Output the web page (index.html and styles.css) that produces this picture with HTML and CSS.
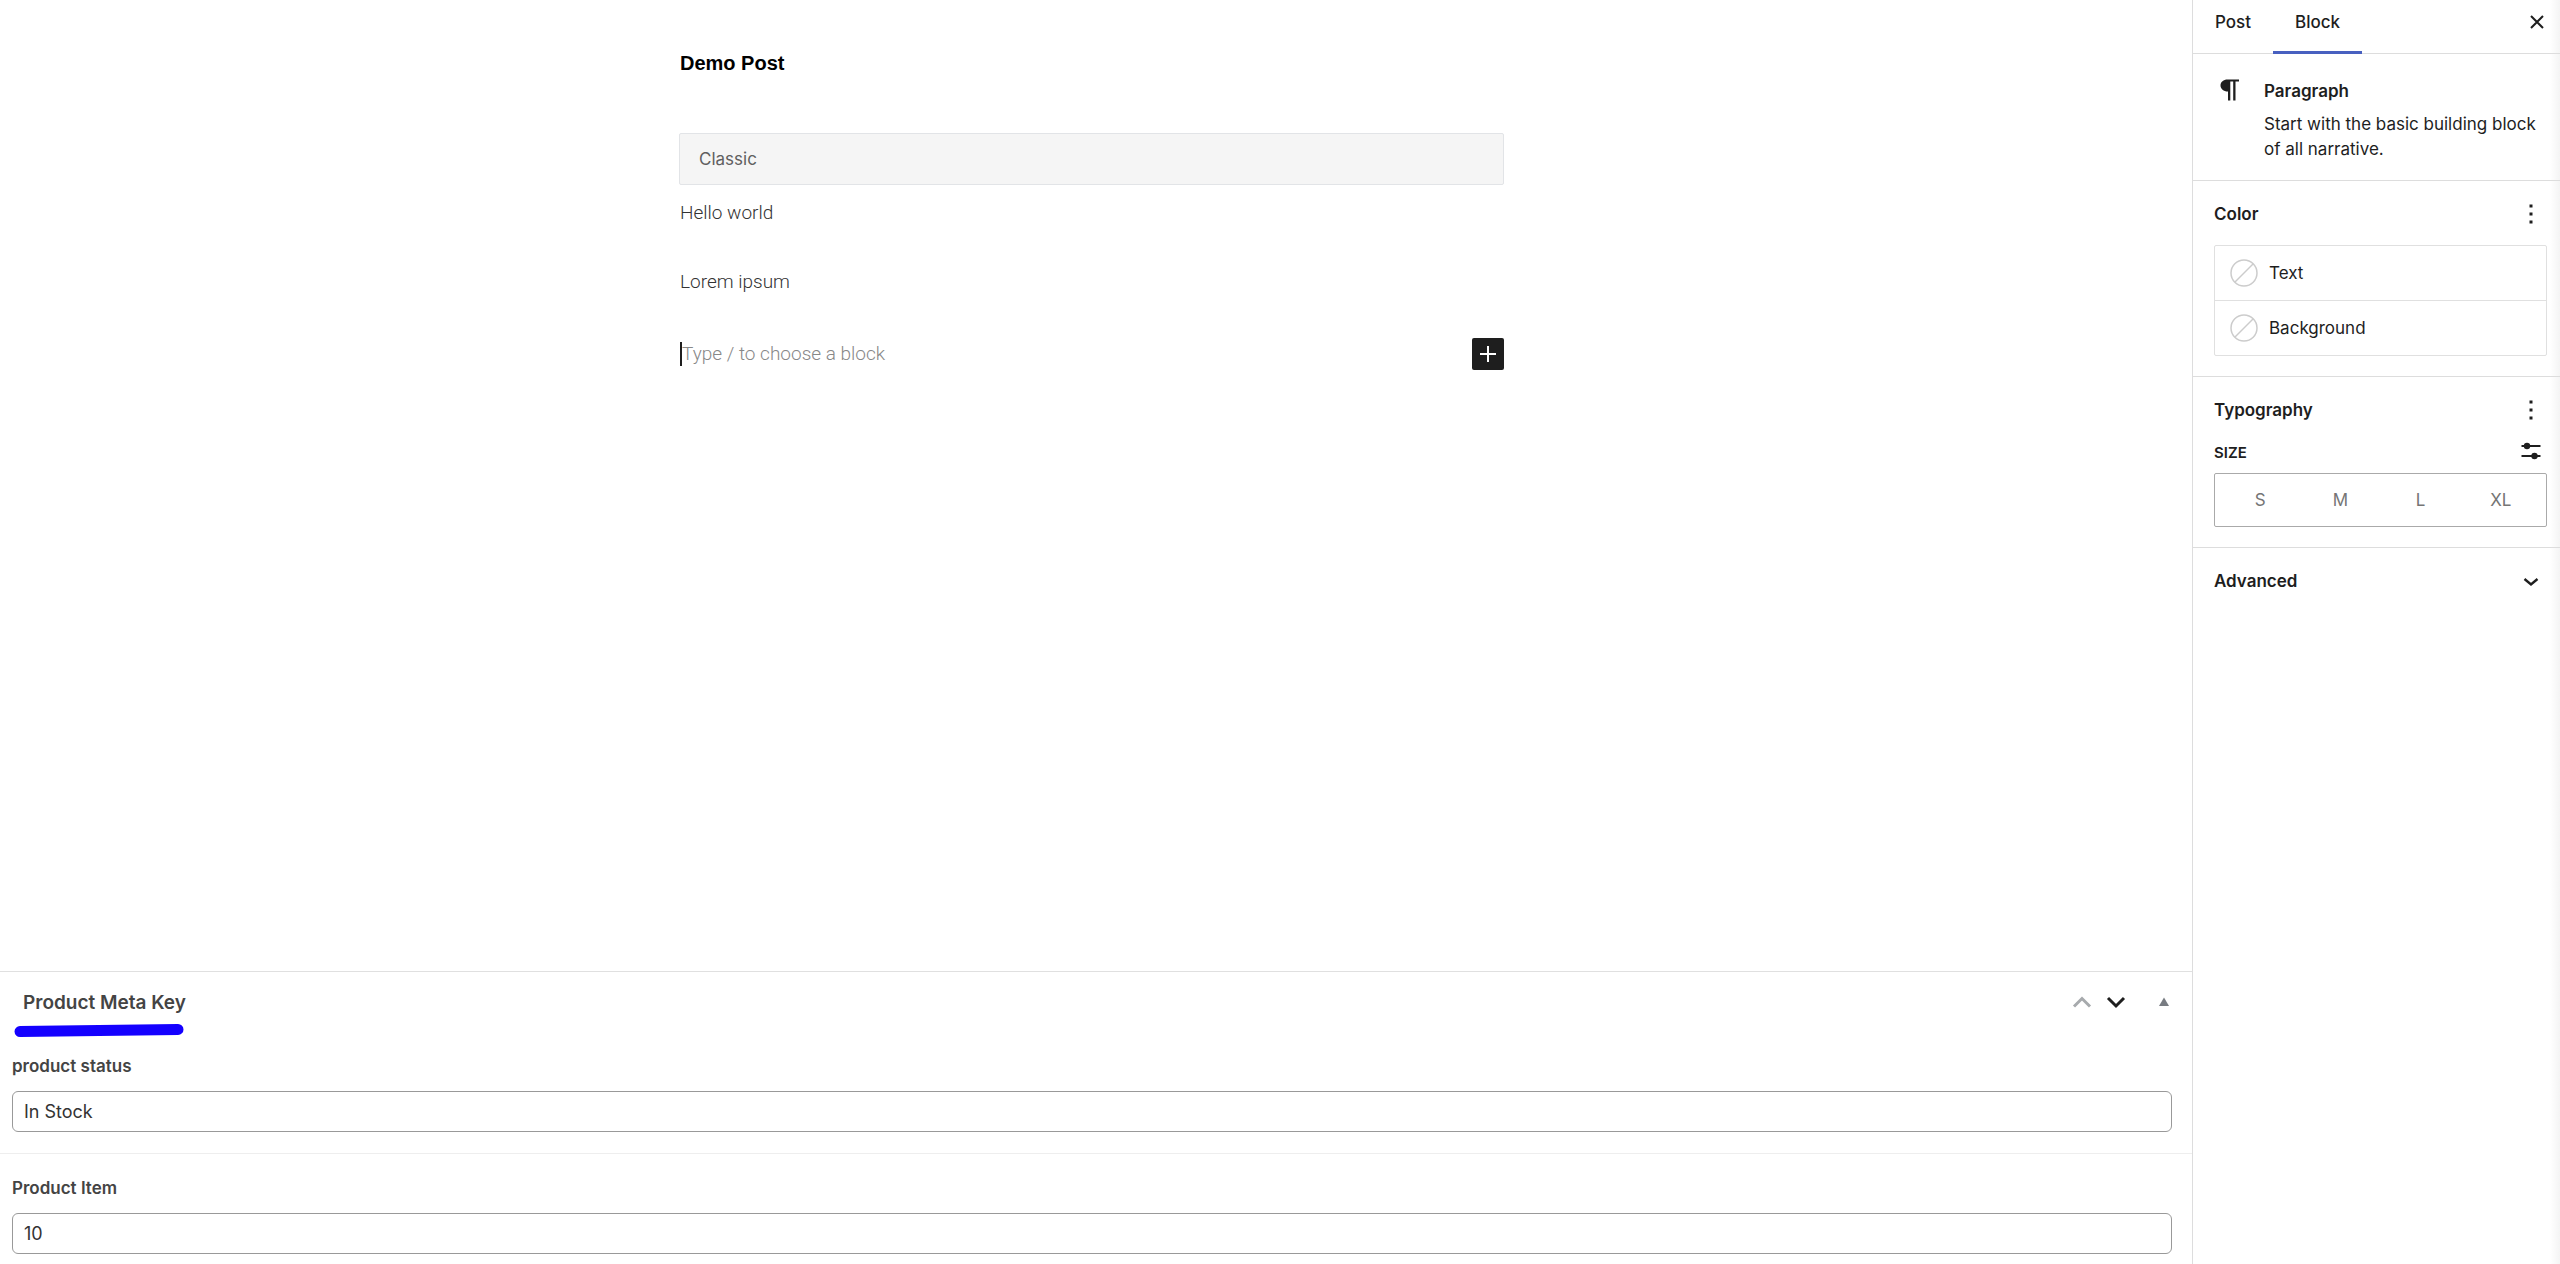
FILE: index.html
```html
<!DOCTYPE html>
<html lang="en">
  <head>
    <meta charset="UTF-8" />
    <title>Edit Post</title>
    <link rel="stylesheet" href="styles.css">
  </head>
  <body>
    <div class="editor">
      <main class="main">
        <div class="canvas">
          <div class="post">
            <h1 class="post-title">Demo Post</h1>
            <div class="classic-bar">Classic</div>
            <p class="post-text">Hello world</p>
            <p class="post-text">Lorem ipsum</p>
            <div class="appender">
              <input type="text" class="appender-input" placeholder="Type / to choose a block" aria-label="Add block">
              <button type="button" class="add-button" aria-label="Add block">
                <svg width="32" height="32" viewBox="0 0 32 32"><path d="M16 8v16M8 16h16" stroke="#fff" stroke-width="2" /></svg>
              </button>
            </div>
          </div>
        </div>

        <!-- custom meta box -->
        <section class="metabox">
          <div class="metabox-header">
            <h2 class="metabox-title">Product Meta Key
              <svg class="marker" width="170" height="14" viewBox="0 0 170 14"><path d="M6 7.5L164 5.5" stroke="#1400ff" stroke-width="11" stroke-linecap="round" /></svg>
            </h2>
            <div class="metabox-actions">
              <button type="button" class="icon-button" aria-label="Move up">
                <svg width="34" height="34" viewBox="0 0 34 34"><path d="M9 21.5L17 13.5L25 21.5" fill="none" stroke="#a7aaad" stroke-width="3" /></svg>
              </button>
              <button type="button" class="icon-button" aria-label="Move down">
                <svg width="34" height="34" viewBox="0 0 34 34"><path d="M9 13L17 21L25 13" fill="none" stroke="#1e1e1e" stroke-width="3" /></svg>
              </button>
              <button type="button" class="icon-button toggle" aria-label="Toggle panel">
                <svg width="34" height="34" viewBox="0 0 34 34"><path d="M17 12.5L22 21H12z" fill="#787c82" /></svg>
              </button>
            </div>
          </div>
          <div class="field">
            <label for="product-status">product status</label>
            <input type="text" id="product-status" value="In Stock">
          </div>
          <div class="field">
            <label for="product-item">Product Item</label>
            <input type="text" id="product-item" value="10">
          </div>
        </section>
      </main>

      <aside class="sidebar">
        <div class="tabs">
          <button type="button" class="tab">Post</button>
          <button type="button" class="tab active">Block</button>
          <button type="button" class="icon-button close" aria-label="Close settings">
            <svg width="24" height="24" viewBox="0 0 24 24"><path d="M6 6L18 18M18 6L6 18" stroke="#1e1e1e" stroke-width="2" /></svg>
          </button>
        </div>

        <div class="panel block-card">
          <svg class="block-icon" width="28" height="28" viewBox="0 0 28 28"><path d="M12.5 1.500H24V3.500H20.500V22.500H18.200V3.500H15.300V22.500H13V13.500C8.500 13.500 5.500 10.800 5.500 7.500C5.500 4 8.500 1.500 12.500 1.500z" fill="#1e1e1e" /></svg>
          <div>
            <h2 class="panel-title">Paragraph</h2>
            <p class="block-description">Start with the basic building block of all narrative.</p>
          </div>
        </div>

        <div class="panel">
          <div class="panel-header">
            <h2 class="panel-title">Color</h2>
            <button type="button" class="icon-button" aria-label="Color options">
              <svg width="32" height="32" viewBox="0 0 32 32"><path d="M14.500 6.500h3v3h-3zM14.500 14.500h3v3h-3zM14.500 22.500h3v3h-3z" fill="#1e1e1e" /></svg>
            </button>
          </div>
          <div class="color-list">
            <button type="button" class="color-item">
              <svg width="28" height="28" viewBox="0 0 28 28"><g fill="none" stroke="#ccc"><circle cx="14" cy="14" r="13" stroke-width="1.500" /><path d="M5 23L23 5" stroke-width="1.500" /></g></svg>
              Text
            </button>
            <button type="button" class="color-item">
              <svg width="28" height="28" viewBox="0 0 28 28"><g fill="none" stroke="#ccc"><circle cx="14" cy="14" r="13" stroke-width="1.500" /><path d="M5 23L23 5" stroke-width="1.500" /></g></svg>
              Background
            </button>
          </div>
        </div>

        <div class="panel">
          <div class="panel-header">
            <h2 class="panel-title">Typography</h2>
            <button type="button" class="icon-button" aria-label="Typography options">
              <svg width="32" height="32" viewBox="0 0 32 32"><path d="M14.500 6.500h3v3h-3zM14.500 14.500h3v3h-3zM14.500 22.500h3v3h-3z" fill="#1e1e1e" /></svg>
            </button>
          </div>
          <div class="size-header">
            <h3 class="size-title">Size</h3>
            <button type="button" class="icon-button" aria-label="Set custom size">
              <svg width="32" height="24" viewBox="0 0 32 24"><path d="M6.500 5H25.500M6.500 15H25.500" stroke="#1e1e1e" stroke-width="2" /><circle cx="12" cy="5" r="3.200" fill="#1e1e1e" /><circle cx="19.500" cy="15" r="3.200" fill="#1e1e1e" /></svg>
            </button>
          </div>
          <div class="size-options">
            <button type="button">S</button>
            <button type="button">M</button>
            <button type="button">L</button>
            <button type="button">XL</button>
          </div>
        </div>

        <div class="panel-header advanced">
          <h2 class="panel-title">Advanced</h2>
          <button type="button" class="icon-button" aria-label="Toggle advanced">
            <svg width="32" height="32" viewBox="0 0 32 32"><path d="M9.500 14L16 19.500L22.500 14" fill="none" stroke="#1e1e1e" stroke-width="2.400" /></svg>
          </button>
        </div>
      </aside>
    </div>
  </body>
</html>
```

FILE: styles.css
```css
* {
    box-sizing: border-box;
}

body {
    margin: 0;
    background: #fff;
    color: #1e1e1e;
    font-family: Inter, "Liberation Sans", sans-serif;
    font-size: 17px;
    line-height: 25px;
}

h1, h2, h3, p {
    margin: 0;
}

button {
    padding: 0;
    border: none;
    background: none;
    color: inherit;
    font: inherit;
    cursor: pointer;
}

svg {
    display: block;
}

.editor {
    display: flex;
    min-height: 100vh;
}

.main {
    flex: 1;
    display: flex;
    flex-direction: column;
}

/* post content */
.canvas {
    flex: 1;
    padding: 49px 9px 0 0;
}

.post {
    max-width: 825px;
    margin: 0 auto;
}

.post-title {
    margin-bottom: 56px;
    padding-left: 1px;
    color: #000;
    font-family: "Liberation Sans", Arial, sans-serif;
    font-size: 20px;
    font-weight: 700;
    line-height: 28px;
}

.classic-bar {
    margin-bottom: 14px;
    padding: 13px 19px 12px;
    border: 1px solid #e2e4e7;
    border-radius: 2px;
    background: #f5f5f5;
    color: #606060;
}

.post-text,
.appender-input {
    font-family: Roboto, "Liberation Sans", sans-serif;
    font-size: 19px;
    font-weight: 300;
    line-height: 28px;
}

.post-text {
    margin-bottom: 41px;
    padding-left: 1px;
    color: #333;
}

.appender {
    display: flex;
    align-items: center;
    padding: 1px 0 0 1px;
}

.appender-input {
    flex: 1;
    height: 24px;
    padding: 0;
    border: none;
    border-left: 2px solid #1e1e1e;
    outline: none;
    background: none;
}

.appender-input::placeholder {
    color: #888;
}

.add-button {
    border-radius: 2px;
    background: #1e1e1e;
}

/* meta box */
.metabox {
    border-top: 1px solid #e0e0e0;
    color: #444;
}

.metabox-header {
    display: flex;
    justify-content: space-between;
    align-items: center;
    height: 60px;
    padding: 0 11px 0 23px;
}

.metabox-title {
    position: relative;
    font-size: 19px;
    font-weight: 600;
}

/* highlight stroke under the title */
.marker {
    position: absolute;
    top: 34px;
    left: -9px;
}

.metabox-actions {
    display: flex;
}

.toggle {
    margin-left: 14px;
}

.field {
    padding: 22px 20px 21px 12px;
}

.field + .field {
    padding-bottom: 10px;
    border-top: 1px solid #eee;
}

.field label {
    display: block;
    margin-bottom: 12px;
    font-weight: 600;
}

.field input {
    display: block;
    width: 100%;
    height: 41px;
    padding: 0 11px;
    border: 1px solid #999;
    border-radius: 6px;
    background: #fff;
    color: #333;
    font: inherit;
    font-size: 18px;
}

/* settings sidebar */
.sidebar {
    width: 368px;
    border-left: 1px solid #ddd;
    background: linear-gradient(to left, #f4f4f4, #fff 10px);
}

.tabs {
    display: flex;
    height: 54px;
    border-bottom: 1px solid #ddd;
}

.tab {
    height: 54px;
    padding: 0 22px 10px;
    font-weight: 500;
}

.tab.active {
    border-bottom: 3px solid #4860c0;
    padding-bottom: 7px;
}

.close {
    margin: 10px 11px 0 auto;
    align-self: flex-start;
}

.panel {
    padding: 17px 13px 20px 21px;
    border-bottom: 1px solid #ddd;
}

.panel-title {
    font-size: 17px;
    font-weight: 600;
    line-height: 26px;
}

.block-card {
    display: flex;
    gap: 21px;
    padding: 24px 12px 18px 22px;
}

.block-icon {
    flex: none;
}

.block-description {
    margin-top: 8px;
}

.panel-header {
    display: flex;
    justify-content: space-between;
    align-items: center;
}

.color-list {
    margin-top: 15px;
    border: 1px solid #e0e0e0;
    border-radius: 2px;
}

.color-item {
    display: flex;
    align-items: center;
    gap: 11px;
    width: 100%;
    height: 54px;
    padding: 0 15px;
}

.color-item + .color-item {
    height: 55px;
    border-top: 1px solid #e0e0e0;
}

.size-header {
    display: flex;
    justify-content: space-between;
    align-items: center;
    margin: 15px 0 8px;
}

.size-title {
    font-size: 15px;
    font-weight: 600;
    line-height: 24px;
    text-transform: uppercase;
}

.size-options {
    display: grid;
    grid-template-columns: repeat(4, 1fr);
    height: 54px;
    padding: 0 5px;
    border: 1px solid #aaa;
    border-radius: 2px;
    color: #757575;
}

.advanced {
    padding: 17px 13px 17px 21px;
}
```
